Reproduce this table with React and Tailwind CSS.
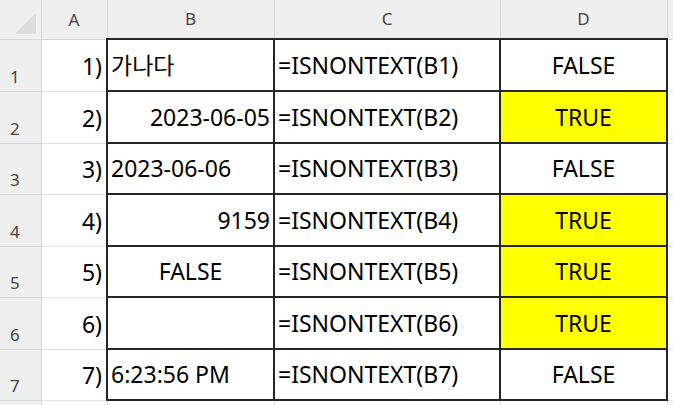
import React from 'react';

const rows = [
  { n: 1, a: '1)', b: '가나다', bAlign: 'text-left', c: '=ISNONTEXT(B1)', d: 'FALSE', h: 'h-[52px]' },
  { n: 2, a: '2)', b: '2023-06-05', bAlign: 'text-right', c: '=ISNONTEXT(B2)', d: 'TRUE', h: 'h-[52px]' },
  { n: 3, a: '3)', b: '2023-06-06', bAlign: 'text-left', c: '=ISNONTEXT(B3)', d: 'FALSE', h: 'h-[51px]' },
  { n: 4, a: '4)', b: '9159', bAlign: 'text-right', c: '=ISNONTEXT(B4)', d: 'TRUE', h: 'h-[52px]' },
  { n: 5, a: '5)', b: 'FALSE', bAlign: 'text-center', c: '=ISNONTEXT(B5)', d: 'TRUE', h: 'h-[51px]' },
  { n: 6, a: '6)', b: '', bAlign: 'text-left', c: '=ISNONTEXT(B6)', d: 'TRUE', h: 'h-[52px]' },
  { n: 7, a: '7)', b: '6:23:56 PM', bAlign: 'text-left', c: '=ISNONTEXT(B7)', d: 'FALSE', h: 'h-[51px]' },
];

const head = 'bg-[#efefef] border-r border-b border-[#d6d6d6] text-[17px] font-normal text-[#444] align-middle text-center p-0';
const rowHead = 'bg-[#efefef] border-r border-b border-[#d6d6d6] text-[17px] text-[#444] align-bottom text-center pr-[11px] pb-[3px] leading-[22px]';
const cell = 'border-2 border-[#262626] align-bottom pb-[9px] leading-[31px] whitespace-nowrap overflow-hidden';

export default function App() {
  return (
    <div
      className="w-[673px] h-[405px] overflow-hidden bg-white text-black"
      style={{ fontFamily: "'Noto Sans', 'Noto Sans CJK KR', sans-serif" }}
    >
      <table className="table-fixed border-collapse w-[673px] text-[23px]">
        <colgroup>
          <col className="w-[41px]" />
          <col className="w-[66px]" />
          <col className="w-[167px]" />
          <col className="w-[226px]" />
          <col className="w-[167px]" />
          <col className="w-[6px]" />
        </colgroup>
        <thead>
          <tr className="h-[39px]">
            <th className={head + ' relative'}>
              <svg className="absolute left-[15px] top-[13px]" width="21" height="21" viewBox="0 0 21 21">
                <polygon points="21,0 21,21 0,21" fill="#dcdcdc" />
              </svg>
            </th>
            <th className={head}>A</th>
            <th className={head}>B</th>
            <th className={head}>C</th>
            <th className={head}>D</th>
            <th className={head}></th>
          </tr>
        </thead>
        <tbody>
          {rows.map((r) => (
            <tr key={r.n} className={r.h}>
              <td className={rowHead}>{r.n}</td>
              <td className="border-r border-b border-[#e1e1e1] align-bottom text-right pr-[4px] pb-[9px] leading-[31px]">{r.a}</td>
              <td className={`${cell} ${r.bAlign} px-[3px]`}>{r.b}</td>
              <td className={`${cell} text-left px-[3px]`}>{r.c}</td>
              <td className={`${cell} text-center ${r.d === 'TRUE' ? 'bg-[#ffff00]' : ''}`}>{r.d}</td>
              <td className="border-b border-[#e1e1e1]"></td>
            </tr>
          ))}
          <tr className="h-[20px]">
            <td className={rowHead}></td>
            <td className="border-r border-[#e1e1e1]"></td>
            <td className="border-r border-[#e1e1e1]"></td>
            <td className="border-r border-[#e1e1e1]"></td>
            <td className="border-r border-[#e1e1e1]"></td>
            <td></td>
          </tr>
        </tbody>
      </table>
    </div>
  );
}
